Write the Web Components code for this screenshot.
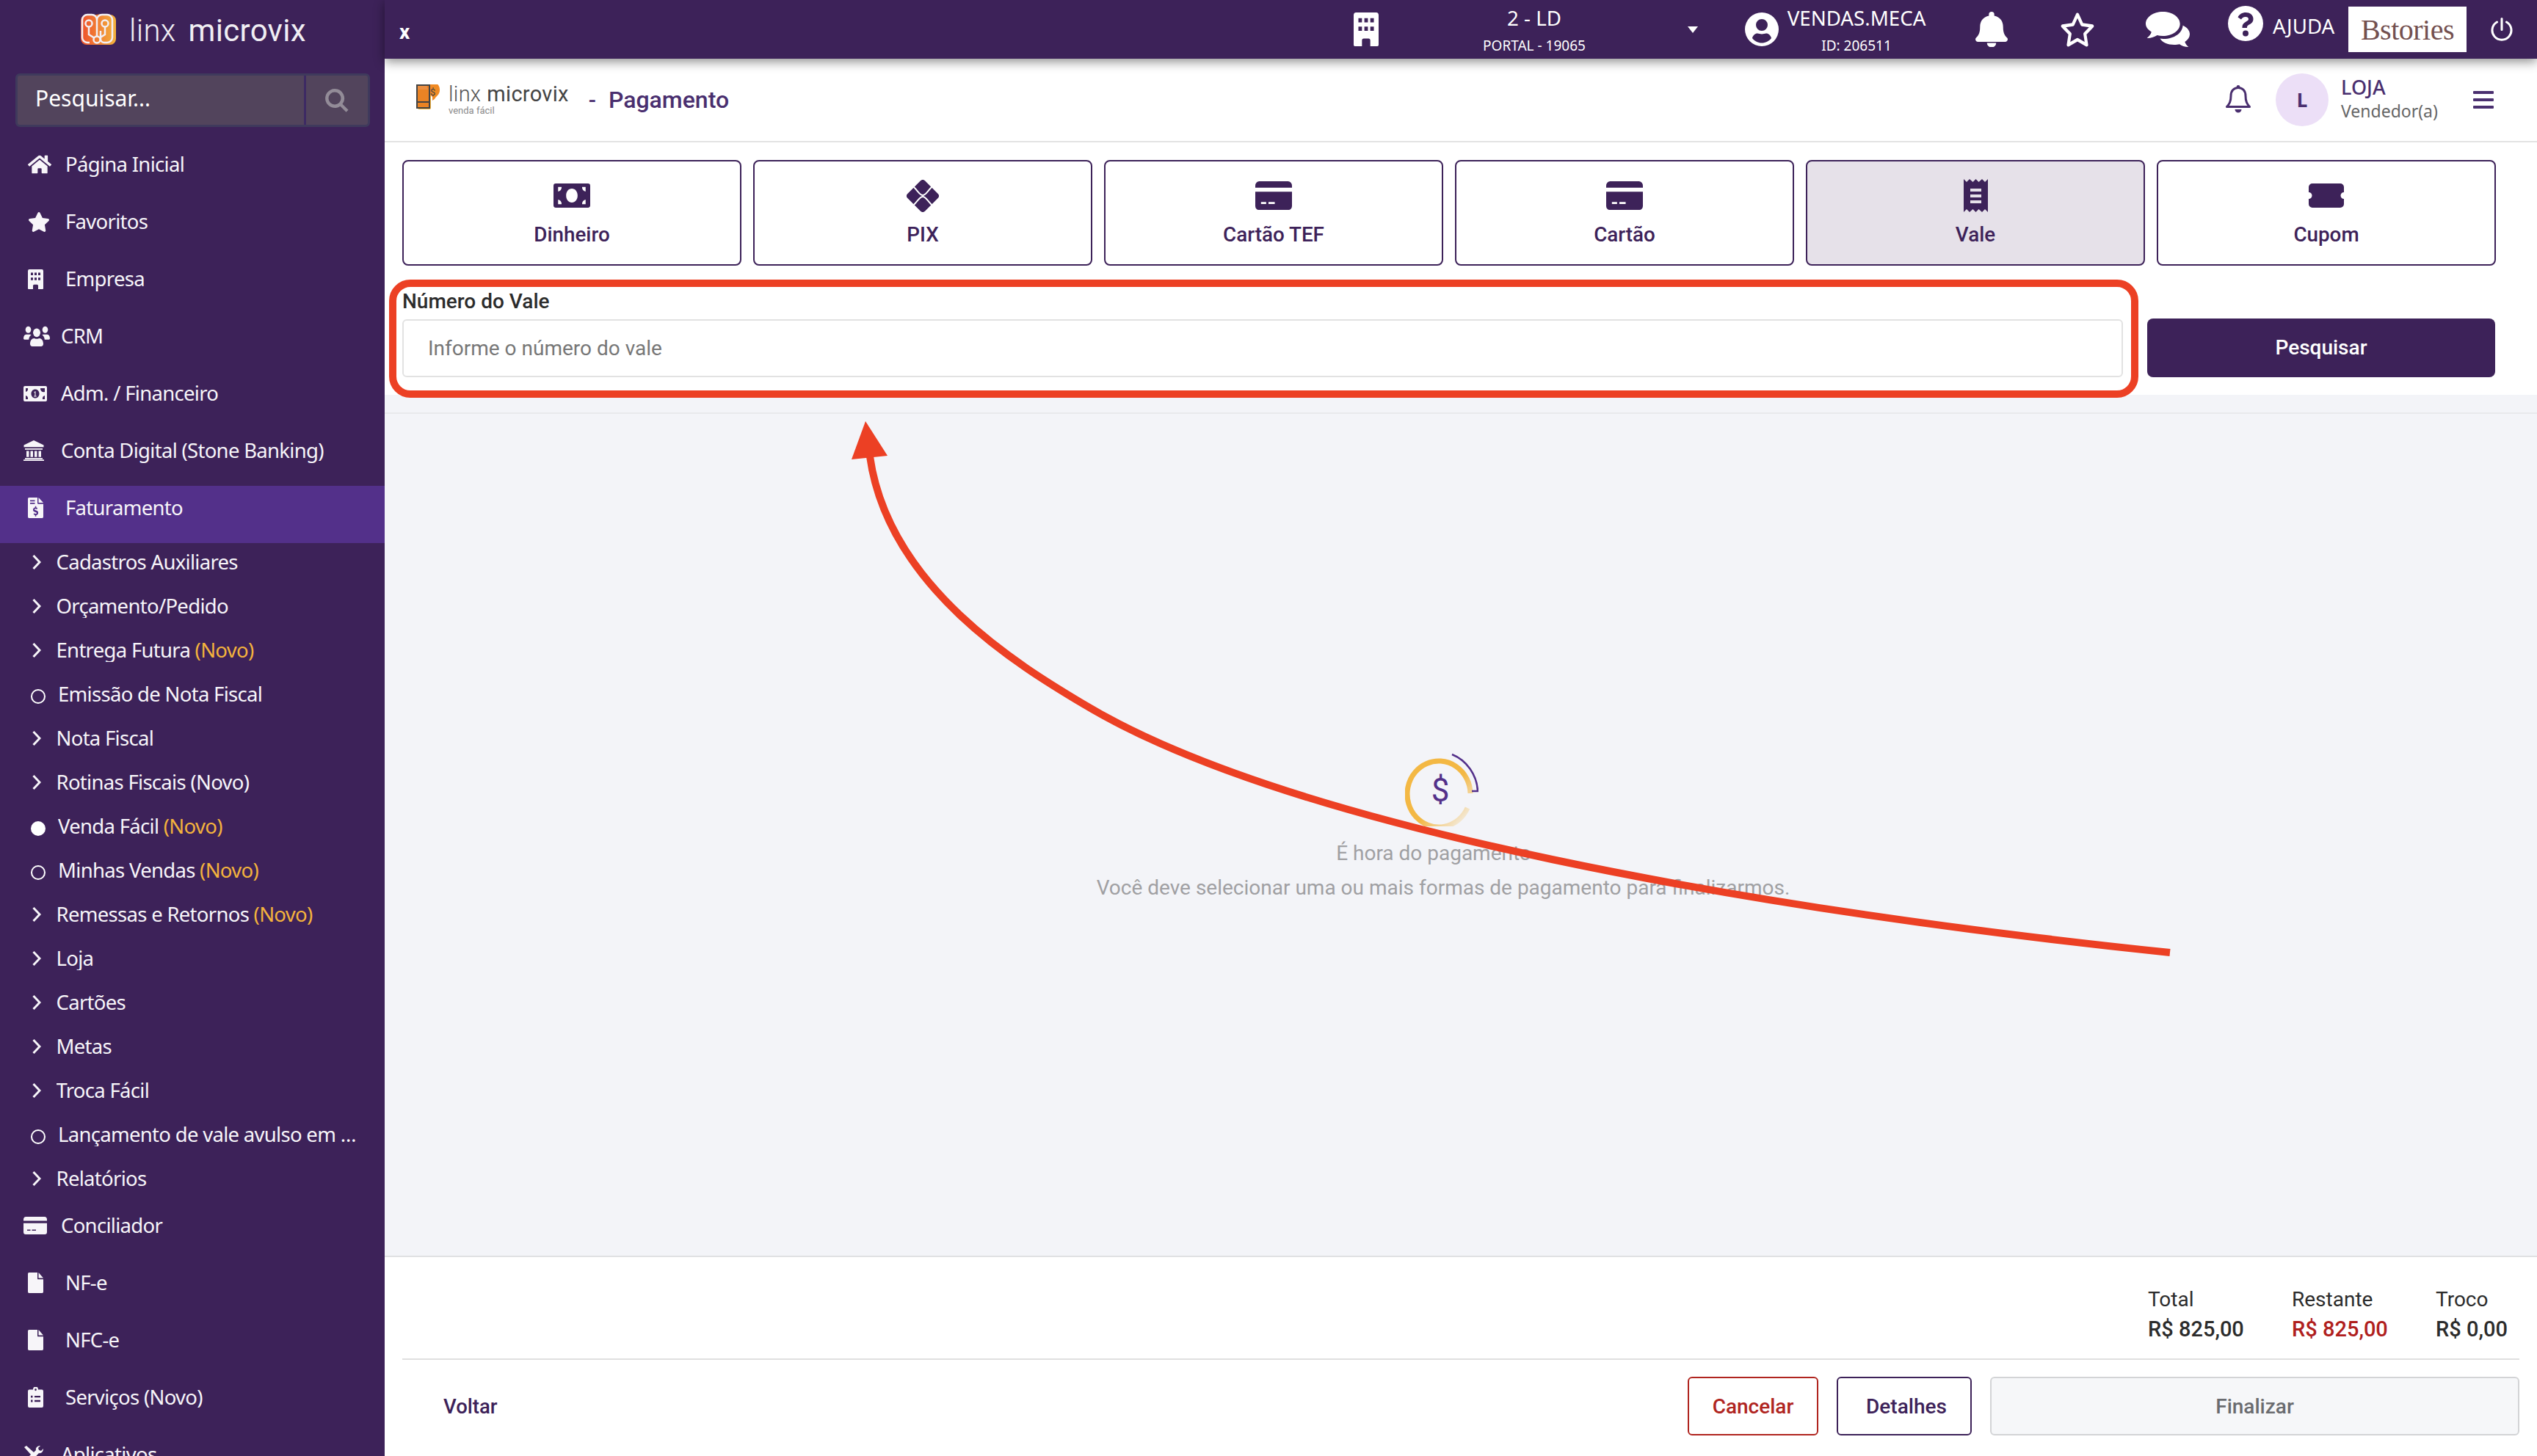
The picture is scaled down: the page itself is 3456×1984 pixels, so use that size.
<!DOCTYPE html>
<html lang="pt-BR">
<head>
<meta charset="utf-8">
<title>Pagamento</title>
<style>
html,body{margin:0;padding:0;height:100%;background:#fff;font-family:Roboto,"Liberation Sans",sans-serif;overflow:hidden}
</style>
</head>
<body>
<app-shell></app-shell>
<script>
const ICONS = {
  home: ['0 0 576 512','<path d="M280.37 148.26L96 300.11V464a16 16 0 0 0 16 16l112.06-.29a16 16 0 0 0 15.92-16V368a16 16 0 0 1 16-16h64a16 16 0 0 1 16 16v95.64a16 16 0 0 0 16 16.05L464 480a16 16 0 0 0 16-16V300L295.67 148.26a12.19 12.19 0 0 0-15.3 0zM571.6 251.47L488 182.56V44.05a12 12 0 0 0-12-12h-56a12 12 0 0 0-12 12v72.61L318.47 43a48 48 0 0 0-61 0L4.34 251.47a12 12 0 0 0-1.6 16.9l25.5 31A12 12 0 0 0 45.15 301l235.22-193.74a12.19 12.19 0 0 1 15.3 0L530.9 301a12 12 0 0 0 16.9-1.6l25.5-31a12 12 0 0 0-1.7-16.93z"/>'],
  star: ['0 0 576 512','<path d="M259.3 17.8L194 150.2 47.9 171.5c-26.2 3.8-36.7 36.1-17.7 54.6l105.7 103-25 145.5c-4.5 26.3 23.2 46 46.4 33.7L288 439.6l130.7 68.7c23.2 12.2 50.9-7.4 46.4-33.7l-25-145.5 105.7-103c19-18.5 8.5-50.8-17.7-54.6L382 150.2 316.7 17.8c-11.7-23.6-45.6-23.9-57.4 0z"/>'],
  staro: ['0 0 576 512','<path fill="none" stroke="currentColor" stroke-width="48" stroke-linejoin="round" d="M288 40l72 146 161 23-116 113 27 160-144-76-144 76 27-160L55 209l161-23z"/>'],
  building: ['0 0 21 24','<path fill-rule="evenodd" d="M2 0h17a2 2 0 0 1 2 2v21a1 1 0 0 1-1 1h-6v-4a1.5 1.5 0 0 0-1.5-1.5h-4A1.5 1.5 0 0 0 7 20v4H1a1 1 0 0 1-1-1V2a2 2 0 0 1 2-2zM4 4v3h3V4zm5 0v3h3V4zm5 0v3h3V4zM4 10v3h3v-3zm5 0v3h3v-3zm5 0v3h3v-3z"/>'],
  users: ['0 0 36 24','<circle cx="6.5" cy="4.5" r="3.8"/><circle cx="29.5" cy="4.5" r="3.8"/><circle cx="18" cy="8" r="5"/><path d="M0 14.5c0-3 2-4.500 4-4.500h5c.6 0 1.200.2 1.700.5-1.800 1-3.200 2.800-3.500 5.500H1.500C.6 16 0 15.300 0 14.500zM36 14.500c0 .8-.6 1.500-1.500 1.500h-5.700c-.3-2.700-1.700-4.500-3.500-5.500.5-.3 1.100-.5 1.700-.5h5c2 0 4 1.500 4 4.500zM9 21c0-4 2.500-6.500 5.500-6.500.8 0 1.800.8 3.500.8s2.700-.8 3.500-.8C24.500 14.500 27 17 27 21c0 1.700-1.300 3-3 3H12c-1.700 0-3-1.300-3-3z"/>'],
  money: ['0 0 32 21','<path fill-rule="evenodd" d="M2 0h28a2 2 0 0 1 2 2v17a2 2 0 0 1-2 2H2a2 2 0 0 1-2-2V2a2 2 0 0 1 2-2zM3 3v5a4.500 4.500 0 0 0 3-5zm20 0a4.500 4.500 0 0 0 6 5V3zM3 13v5h3a4.500 4.500 0 0 0-3-5zm26 0a4.500 4.500 0 0 0-3 5h3zM16 4.500c-3.300 0-5.500 2.700-5.500 6s2.200 6 5.500 6 5.500-2.700 5.500-6-2.200-6-5.500-6z"/><path d="M14.500 8l2-1v6.500h1.200v1h-3.500v-1h1.200V8.800l-.9.400z"/>'],
  cash: ['0 0 32 21','<path fill-rule="evenodd" d="M2 0h28a2 2 0 0 1 2 2v17a2 2 0 0 1-2 2H2a2 2 0 0 1-2-2V2a2 2 0 0 1 2-2zM4 3v4a3.500 3.500 0 0 0 3-4zm21 0a3.500 3.500 0 0 0 3 4V3zM4 14v4h3a3.500 3.500 0 0 0-3-4zm24 0a3.500 3.500 0 0 0-3 4h3zM16 4.500c-3 0-5 2.700-5 6s2 6 5 6 5-2.700 5-6-2-6-5-6z"/>'],
  bank: ['0 0 28 24','<path d="M14 0l13.500 5.500V8H.5V5.500zM2 9.500h24V11H2zM4 12.500h3.500v7H4zM9.500 12.500H13v7H9.500zM15 12.500h3.500v7H15zM20.500 12.500H24v7h-3.500zM2 20.500h24V22H2zM0 22.500h28V24H0z"/>'],
  invoice: ['0 0 21 24','<path fill-rule="evenodd" d="M1.500 0H13v6.500a1 1 0 0 0 1 1h7V22.500a1.500 1.500 0 0 1-1.500 1.500h-18A1.500 1.500 0 0 1 0 22.500v-21A1.500 1.500 0 0 1 1.500 0zM3 3v1.500h6.500V3zM3 6v1.500h6.500V6zM11.300 10h-1.500v1.500c-1.600.2-2.800 1.300-2.800 2.800 0 1.500 1.200 2.200 2.800 2.600l1.300.4c.6.200.9.400.9.800 0 .5-.5.800-1.200.8-.7 0-1.500-.2-2.200-.7l-1 1.300c.7.600 1.400.9 2.200 1v1.500h1.500V20.500c1.700-.2 2.800-1.300 2.800-2.800 0-1.600-1.200-2.300-2.800-2.700l-1.300-.4c-.6-.2-.9-.4-.9-.7 0-.5.500-.8 1.100-.8.700 0 1.300.2 1.900.6l1-1.300a4.500 4.500 0 0 0-1.800-.8zM14.500 0L21 6h-6.500z"/>'],
  file: ['0 0 21 24','<path d="M13 0H1.500A1.500 1.500 0 0 0 0 1.500v21A1.500 1.500 0 0 0 1.500 24h18a1.500 1.500 0 0 0 1.500-1.500V8h-7a1 1 0 0 1-1-1zM14.500 0v6.500H21z"/>'],
  clip: ['0 0 21 24','<path fill-rule="evenodd" d="M7 3a3.500 3.500 0 0 1 7 0h5a2 2 0 0 1 2 2v17a2 2 0 0 1-2 2H2a2 2 0 0 1-2-2V5a2 2 0 0 1 2-2zm3.500-1.200a1.300 1.300 0 1 0 0 2.600 1.300 1.300 0 0 0 0-2.600zM4 10v2.500h2.500V10zm5 .3v2h8v-2zM4 15v2.500h2.500V15zm5 .3v2h8v-2z"/>'],
  card: ['0 0 32 22','<path fill-rule="evenodd" d="M0 3.500A3.500 3.500 0 0 1 3.500 0h25A3.500 3.500 0 0 1 32 3.500V5H0zM0 8h32v11a3 3 0 0 1-3 3H3a3 3 0 0 1-3-3zm5 8v1.500h4.500V16zm6.500 0v1.500H17V16z"/>'],
  tools: ['0 0 28 24','<path d="M1 2l3-2 10 9 3-3c-1-3 2-6 6-6l-3 3 1 3 3 1 3-3c0 4-3 7-6 6L8 24l-4-1-1-4 7-7z"/>'],
  pix: ['0 0 44 44','<path d="M19 1.300a4 4 0 0 1 6 0l17.700 17.700a4 4 0 0 1 0 6L25 42.700a4 4 0 0 1-6 0L1.300 25a4 4 0 0 1 0-6z"/><path fill="none" stroke="#fff" stroke-width="2" d="M9.500 9.500C17 17 18 21 22 21s5-4 12.500-11.500M9.500 34.500C17 27 18 23 22 23s5 4 12.500 11.500"/>'],
  receipt: ['0 0 33 45','<path fill-rule="evenodd" d="M0 0l4 4 4-4 4.500 4L16.500 0l4 4 4.500-4 4 4 4-4v45l-4-4-4 4-4.500-4-4 4-4-4-4.500 4-4-4-4 4zM9 13v4h15v-4zm0 8v4h15v-4zm0 8v4h15v-4z"/>'],
  ticket: ['0 0 50 33','<path d="M6 0h38a5 5 0 0 1 5 5v7a4.500 4.500 0 0 0 0 9v7a5 5 0 0 1-5 5H6a5 5 0 0 1-5-5v-7a4.500 4.500 0 0 0 0-9V5a5 5 0 0 1 5-5z"/>'],
  search: ['0 0 32 32','<path fill-rule="evenodd" d="M13 0a13 13 0 0 1 10.500 20.700l8 8-3 3-8-8A13 13 0 1 1 13 0zm0 4.500a8.500 8.500 0 1 0 0 17 8.500 8.500 0 0 0 0-17z"/>'],
  chev: ['0 0 12 22','<path fill="none" stroke="currentColor" stroke-width="3" d="M1.500 2L10 11l-8.500 9"/>'],
  bell: ['0 0 42 48','<path d="M21 0a3.500 3.500 0 0 1 3.500 3.500v2C32 7 36 13 36 20.500c0 10 3 12.500 5 14.800.6.700 1 1.500 1 2.200 0 1.800-1.400 3.500-3.500 3.500h-35C1.400 41 0 39.300 0 37.500c0-.7.400-1.500 1-2.200C3 33 6 30.500 6 20.500 6 13 10 7 17.500 5.500v-2A3.500 3.500 0 0 1 21 0zM15 42.500h12a6 6 0 0 1-12 0z"/>'],
  bello: ['0 0 36 40','<path fill="none" stroke="currentColor" stroke-width="3" stroke-linejoin="round" d="M18 3.500c-6 0-10 4.500-10 11 0 8-2 11-5.500 15h31c-3.500-4-5.500-7-5.500-15 0-6.500-4-11-10-11z"/><path d="M18 0a2.300 2.300 0 0 1 2.300 2.300V5h-4.600V2.300A2.300 2.300 0 0 1 18 0zM13.500 33h9a4.500 4.500 0 0 1-9 0z"/>'],
  user: ['0 0 46 46','<path fill-rule="evenodd" d="M23 0a23 23 0 1 1 0 46 23 23 0 0 1 0-46zm0 9a8 8 0 1 0 0 16 8 8 0 0 0 0-16zm-13 26c3 4 8 6.500 13 6.500s10-2.500 13-6.500c-1-4-4-6.500-7-6.500-2 0-3.500 1-6 1s-4-1-6-1c-3 0-6 2.500-7 6.500z"/>'],
  comments: ['0 0 54 48','<path d="M21 0c11.600 0 21 7.400 21 16.500S32.600 33 21 33c-2.500 0-4.800-.3-7-1-3 2-7 4-12.500 4 2.500-2.500 5-5.500 5.500-8.500C2.700 24.500 0 20.700 0 16.500 0 7.400 9.400 0 21 0z"/><path d="M45 18.500c5.500 2.500 9 7 9 12 0 4-2.200 7.700-6 10.500.5 2.500 2.500 5 4.500 7-5 0-8.500-1.800-11-3.800-2 .5-4 .8-6.500.8-8 0-15-3.500-17.500-8.500 2 .3 3 .5 4.500.5 13 0 23-8 23.500-18.500z"/>'],
  help: ['0 0 48 48','<path fill-rule="evenodd" d="M24 0a24 24 0 1 1 0 48 24 24 0 0 1 0-48zm.500 9c-5.500 0-9 2.500-11 6.500l4.500 3c1.500-2.200 2.800-3.500 6-3.500 2.300 0 4 1.200 4 3 0 1.700-1.500 2.500-3.700 3.700-2.600 1.500-4.800 3.300-4.800 6.800v1.500h6.500v-1c0-1.800 1.300-2.500 3.500-3.700 2.800-1.600 5-3.500 5-7.500C34.500 12 29.500 9 24.500 9zm-.500 24.500a4 4 0 1 0 0 8 4 4 0 0 0 0-8z"/>'],
  power: ['0 0 30 32','<path fill="none" stroke="currentColor" stroke-width="3" stroke-linecap="round" d="M15 1.500v15M8.500 6A13 13 0 1 0 21.500 6"/>'],
  menu: ['0 0 28 24','<path d="M1 0h26a1 1 0 0 1 1 1v2a1 1 0 0 1-1 1H1a1 1 0 0 1-1-1V1a1 1 0 0 1 1-1zM1 10h26a1 1 0 0 1 1 1v2a1 1 0 0 1-1 1H1a1 1 0 0 1-1-1v-2a1 1 0 0 1 1-1zM1 20h26a1 1 0 0 1 1 1v2a1 1 0 0 1-1 1H1a1 1 0 0 1-1-1v-2a1 1 0 0 1 1-1z"/>']
};

customElements.define('app-icon', class extends HTMLElement {
  connectedCallback() {
    let [vb, body] = ICONS[this.getAttribute('name')];
    this.attachShadow({mode: 'open'}).innerHTML = `<style>
      :host{display:block;width:${this.getAttribute('w')}px;height:${this.getAttribute('h')}px;flex:none}
      svg{display:block;width:100%;height:100%;fill:currentColor}
    </style><svg viewBox="${vb}" preserveAspectRatio="none">${body}</svg>`;
  }
});

customElements.define('nav-item', class extends HTMLElement {
  connectedCallback() {
    let [w, h] = (this.getAttribute('size') || '21 24').split(' ');
    this.attachShadow({mode: 'open'}).innerHTML = `<style>
      :host{display:flex;height:78px;box-sizing:border-box;align-items:flex-start;color:#f7f5f9;padding:14px 0 0 38px;font:27.500px/32px "Noto Sans",sans-serif;letter-spacing:-.7px}
      :host([flush]){padding-left:32px}
      :host([active]){background:#53308a}
      .ic{width:51px;height:32px;display:flex;align-items:center}
    </style><span class="ic"><app-icon name="${this.getAttribute('icon')}" w="${w}" h="${h}"></app-icon></span><span><slot></slot></span>`;
  }
});

customElements.define('sub-item', class extends HTMLElement {
  connectedCallback() {
    let kind = this.getAttribute('kind') || 'chev';
    let mark = kind == 'chev' ? '<app-icon name="chev" w="12" h="22"></app-icon>' : `<i class="dot ${kind}"></i>`;
    this.attachShadow({mode: 'open'}).innerHTML = `<style>
      :host{display:flex;height:60px;box-sizing:border-box;padding:0 0 9px 44px;align-items:center;color:#f7f5f9;font:27.500px/32px "Noto Sans",sans-serif;letter-spacing:-.7px}
      .m{width:32.500px;flex:none}
      :host([kind]) .m{width:37px;margin-left:-2px}
      .dot{display:block;width:16px;height:16px;border:2px solid #fff;border-radius:50%;margin-top:6px}
      .dot.on{background:#fff}
      .t{flex:1;min-width:0;margin-right:33px;overflow:hidden;white-space:nowrap;text-overflow:ellipsis}
    </style><span class="m">${mark}</span><span class="t"><slot></slot></span>`;
  }
});

customElements.define('side-bar', class extends HTMLElement {
  connectedCallback() {
    let sub = [
      ['', 'Cadastros Auxiliares'], ['', 'Orçamento/Pedido'], ['', 'Entrega Futura <b>(Novo)</b>'],
      ['off', 'Emissão de Nota Fiscal'], ['', 'Nota Fiscal'], ['', 'Rotinas Fiscais (Novo)'],
      ['on', 'Venda Fácil <b>(Novo)</b>'], ['off', 'Minhas Vendas <b>(Novo)</b>'], ['', 'Remessas e Retornos <b>(Novo)</b>'],
      ['', 'Loja'], ['', 'Cartões'], ['', 'Metas'], ['', 'Troca Fácil'],
      ['off', 'Lançamento de vale avulso em lote'], ['', 'Relatórios']
    ].map(([k, t]) => `<sub-item ${k ? `kind="${k}"` : ''}>${t}</sub-item>`).join('');
    this.attachShadow({mode: 'open'}).innerHTML = `<style>
      :host{display:block;width:524px;flex:none;background:#3d2259;overflow:hidden;height:100%}
      .logo{height:80px;display:flex;align-items:flex-start;padding-left:110px;box-sizing:border-box;color:#f0eef3}
      .logo svg{margin-top:18px;flex:none}
      .w{font:300 42px/50px Roboto,sans-serif;margin:17px 0 0 18px;letter-spacing:.3px}
      .w + .w{font-weight:400;margin-left:17px}
      .sb{margin:20px 20px 21px 21px;height:73px;box-sizing:border-box;border:3px solid #3f3a5c;border-radius:6px;background:#52445c;display:flex;color:#fff}
      .sb div{flex:1;border-right:3px solid #3d2a63;font:30px/62px "Noto Sans",sans-serif;padding-left:24px;border-radius:4px 0 0 4px}
      .sb span{width:84px;display:flex;align-items:center;justify-content:center;color:#938c98}
      b{font-weight:400;color:#f3b33d}
    </style>
    <div class="logo">
      <svg width="48" height="44" viewBox="0 0 48 44"><defs><linearGradient id="lg"><stop offset="0" stop-color="#ee4f2c"/><stop offset="1" stop-color="#f3b33d"/></linearGradient></defs>
        <path d="M8 2h14c3-1 6-1 10 0h8a8 8 0 0 1 8 8v25a8 8 0 0 1-8 8H8a8 8 0 0 1-8-8V10a8 8 0 0 1 8-8z" fill="url(#lg)"/>
        <g fill="none" stroke="#f2eff4" stroke-width="2.500"><path d="M12 40H9a7 7 0 0 1-7-7V9a7 7 0 0 1 7-7h6a7 7 0 0 1 7 7v23M22 9a7 7 0 0 1 7-7h7a7 7 0 0 1 7 7v24a7 7 0 0 1-7 7h-4a5 5 0 0 1-5-5V24"/><circle cx="11" cy="14" r="4.500"/><circle cx="33" cy="14" r="4.500"/><circle cx="22" cy="36" r="4.500"/><path d="M11 18.500V29l8 5M33 18.500V29l-8 5"/></g></svg>
      <span class="w">linx</span><span class="w">microvix</span>
    </div>
    <div class="sb"><div>Pesquisar...</div><span><app-icon name="search" w="32" h="32"></app-icon></span></div>
    <nav-item icon="home" size="32 28">Página Inicial</nav-item>
    <nav-item icon="star" size="30 27">Favoritos</nav-item>
    <nav-item icon="building" size="21 27">Empresa</nav-item>
    <nav-item flush icon="users" size="36 28">CRM</nav-item>
    <nav-item flush icon="money" size="32 21">Adm. / Financeiro</nav-item>
    <nav-item flush icon="bank" size="28 28">Conta Digital (Stone Banking)</nav-item>
    <nav-item active icon="invoice" size="21 28">Faturamento</nav-item>
    ${sub}
    <nav-item flush icon="card" size="32 24">Conciliador</nav-item>
    <nav-item icon="file" size="21 28">NF-e</nav-item>
    <nav-item icon="file" size="21 28">NFC-e</nav-item>
    <nav-item icon="clip" size="21 28">Serviços (Novo)</nav-item>
    <nav-item flush icon="tools" size="28 24">Aplicativos</nav-item>`;
  }
});

customElements.define('top-bar', class extends HTMLElement {
  connectedCallback() {
    this.attachShadow({mode: 'open'}).innerHTML = `<style>
      :host{display:flex;height:80px;flex:none;align-items:center;background:#3d2259;color:#fff;position:relative;z-index:2;box-shadow:0 4px 14px rgba(0,0,0,.45);font-family:"Noto Sans",sans-serif}
      .x{font:700 28px Roboto,sans-serif;margin-left:20px;margin-right:auto;padding-top:6px}
      .st{width:408px;text-align:center;margin-left:8px}
      .big{font-size:27.700px;line-height:36px;display:block}
      .sm{font-size:19px;line-height:24px;display:block;margin-top:8px}
      .car{width:0;height:0;border:7px solid transparent;border-top:9px solid #fff;border-bottom:0;margin:0 0 0 5px}
      .nm{width:190px;text-align:center;margin-left:11px}
      .aj{font-size:27.700px;margin:-10px 0 0 13px;width:84px;white-space:nowrap}
      .bs{width:161px;height:62px;background:#fff;margin-left:19px;display:flex;align-items:center;justify-content:center;color:#74504f;font:40px "Liberation Serif",serif;letter-spacing:-.5px}
    </style>
    <span class="x">x</span>
    <app-icon name="building" w="34" h="46"></app-icon>
    <div class="st"><span class="big">2 - LD</span><span class="sm">PORTAL - 19065</span></div>
    <span class="car"></span>
    <app-icon name="user" w="46" h="46" style="margin-left:64px"></app-icon>
    <div class="nm"><span class="big">VENDAS.MECA</span><span class="sm">ID: 206511</span></div>
    <app-icon name="bell" w="44" h="48" style="margin-left:67px"></app-icon>
    <app-icon name="staro" w="50" h="48" style="margin-left:70px"></app-icon>
    <app-icon name="comments" w="60" h="48" style="margin-left:68px"></app-icon>
    <app-icon name="help" w="48" h="48" style="margin:-16px 0 0 52px"></app-icon>
    <span class="aj">AJUDA</span>
    <div class="bs">Bstories</div>
    <app-icon name="power" w="30" h="32" style="margin:0 33px 0 33px"></app-icon>`;
  }
});

customElements.define('page-header', class extends HTMLElement {
  connectedCallback() {
    this.attachShadow({mode: 'open'}).innerHTML = `<style>
      :host{display:flex;height:114px;box-sizing:border-box;flex:none;align-items:center;padding:0 59px 0 43px;border-bottom:2px solid #e3e3e3;background:#fff;color:#4a2f6f}
      .brand{display:grid;grid-template-columns:auto auto;column-gap:11px;align-items:start;color:#555}
      .lx{font:300 29px/30px Roboto,sans-serif;color:#555;margin-top:-2px;letter-spacing:.3px}
      .lx b{font-weight:400;margin-left:8px;color:#444}
      .vf{font:13px/13px Roboto,sans-serif;color:#8a8a8a;margin-top:1px}
      .ti{font:500 32px Roboto,sans-serif;margin-left:17px}
      .d{font:500 30px Roboto,sans-serif;margin-left:27px}
      .sp{flex:1}
      .av{width:72px;height:72px;border-radius:50%;background:#ecdff7;display:flex;align-items:center;justify-content:center;font:700 26px "Noto Sans",sans-serif;margin-left:33px}
      .who{margin:-3px 0 0 17px;width:180px;font-family:"Noto Sans",sans-serif}
      .who b{display:block;font:500 27px/32px "Noto Sans",sans-serif}
      .who span{display:block;font:23px/32px "Noto Sans",sans-serif;color:#666}
    </style>
    <div class="brand">
      <svg width="33" height="36" viewBox="0 0 33 36" style="grid-row:span 2"><rect x="2" y="7" width="18" height="27" rx="2" fill="#f3b33d"/><path d="M14 1a10 10 0 0 1 18 7c0 6-5 8-7 12l-3 2v-5l-3-3z" fill="#f08a24"/><path d="M1 1h17v31H1zM1 24h17" fill="#e87a20" fill-opacity=".85" stroke="#444" stroke-width="2"/><text x="19" y="15" font-size="13" font-family="Roboto" fill="#444">$</text></svg>
      <div class="lx">linx<b>microvix</b></div>
      <div class="vf">venda fácil</div>
    </div>
    <span class="d">-</span><span class="ti">Pagamento</span>
    <span class="sp"></span>
    <app-icon name="bello" w="36" h="40"></app-icon>
    <div class="av">L</div>
    <div class="who"><b>LOJA</b><span>Vendedor(a)</span></div>
    <app-icon name="menu" w="28" h="24"></app-icon>`;
  }
});

customElements.define('pay-tab', class extends HTMLElement {
  connectedCallback() {
    let [w, h] = this.getAttribute('size').split(' ');
    this.attachShadow({mode: 'open'}).innerHTML = `<style>
      :host{display:flex;flex-direction:column;align-items:center;box-sizing:border-box;height:144px;border:2px solid #3d2259;border-radius:8px;background:#fff;color:#3d2259;font:500 27.800px/34px Roboto,sans-serif}
      :host([active]){background:#e6e1e9}
      .i{height:45px;margin-top:24px;display:flex;align-items:center}
      .l{margin-top:14px}
    </style><span class="i"><app-icon name="${this.getAttribute('icon')}" w="${w}" h="${h}"></app-icon></span><span class="l"><slot></slot></span>`;
  }
});

customElements.define('voucher-form', class extends HTMLElement {
  connectedCallback() {
    this.attachShadow({mode: 'open'}).innerHTML = `<style>
      :host{display:grid;grid-template-columns:1fr 474px;column-gap:33px;align-items:end;padding:34px 57px 24px 24px;background:#fff;flex:none}
      label{display:block;font:500 28px/30px Roboto,sans-serif;color:#2c2c2c;margin-bottom:9px}
      .in{height:79px;box-sizing:border-box;border:2px solid #e2e2e2;border-radius:6px;padding-left:33px;font:28px/75px Roboto,sans-serif;color:#777}
      button{height:80px;border:0;border-radius:8px;background:#3d2259;color:#fff;font:500 28px Roboto,sans-serif;padding:0 0 2px}
    </style>
    <div><label>Número do Vale</label><div class="in">Informe o número do vale</div></div>
    <button>Pesquisar</button>`;
  }
});

customElements.define('empty-state', class extends HTMLElement {
  connectedCallback() {
    this.attachShadow({mode: 'open'}).innerHTML = `<style>
      :host{flex:1;display:flex;flex-direction:column;align-items:center;justify-content:center;padding:0 48px 16px 0;background:#f3f4f8;color:#a0a0a3;font:28px/47px Roboto,sans-serif;min-height:0}
      svg{display:block;margin:0 0 13px -4px}
      .a{margin-right:26px}
    </style>
    <svg width="100" height="100" viewBox="0 0 100 100">
      <defs><linearGradient id="fade" x1="0" y1="0" x2="1" y2="1"><stop offset=".55" stop-color="#f3b844"/><stop offset=".95" stop-color="#f3b844" stop-opacity=".05"/></linearGradient></defs>
      <path d="M89 55A43 45 0 1 0 85 75" fill="none" stroke="url(#fade)" stroke-width="7"/>
      <path d="M64 2C84 10 98 30 99 52h-8" fill="none" stroke="#53308a" stroke-width="2.500"/>
      <text x="48" y="66" text-anchor="middle" font-family="Roboto" font-size="44" fill="#53308a">$</text>
    </svg>
    <div class="a">É hora do pagamento</div>
    <div>Você deve selecionar uma ou mais formas de pagamento para finalizarmos.</div>`;
  }
});

customElements.define('total-col', class extends HTMLElement {
  connectedCallback() {
    this.attachShadow({mode: 'open'}).innerHTML = `<style>
      :host{display:block;font:28px/40px Roboto,sans-serif;color:#2c2c2c}
      b{display:block;font-weight:500;font-size:29px;white-space:nowrap}
      :host([due]) b{color:#b0201d}
    </style>${this.getAttribute('label')}<b>${this.getAttribute('value')}</b>`;
  }
});

customElements.define('action-btn', class extends HTMLElement {
  connectedCallback() {
    this.attachShadow({mode: 'open'}).innerHTML = `<style>
      :host{display:flex;align-items:center;justify-content:center;box-sizing:border-box;height:80px;border:2px solid currentColor;border-radius:6px;font:500 28px Roboto,sans-serif;background:#fff}
      :host([look=red]){color:#b0251f;width:178px}
      :host([look=purple]){color:#3d2259;width:184px;padding-left:6px}
      :host([look=off]){width:721px;color:#6a6c70;background:#f6f7f9;border-color:#d3d4d6}
    </style><slot></slot>`;
  }
});

customElements.define('pay-footer', class extends HTMLElement {
  connectedCallback() {
    this.attachShadow({mode: 'open'}).innerHTML = `<style>
      :host{display:block;flex:none;height:273px;box-sizing:border-box;background:#fff;border-top:2px solid #e0e1e3;padding:0 24px}
      .tot{display:grid;grid-template-columns:196px 196px 98px;justify-content:end;height:138px;box-sizing:border-box;padding:38px 16px 0 0}
      hr{margin:0;border:0;border-top:2px solid #e0e0e0}
      .acts{display:flex;gap:25px;align-items:center;padding-top:23px}
      .v{font:500 27.500px Roboto,sans-serif;color:#3d2259;padding-left:56px;margin-right:auto}
    </style>
    <div class="tot">
      <total-col label="Total" value="R$ 825,00"></total-col>
      <total-col due label="Restante" value="R$ 825,00"></total-col>
      <total-col label="Troco" value="R$ 0,00"></total-col>
    </div>
    <hr>
    <div class="acts">
      <span class="v">Voltar</span>
      <action-btn look="red">Cancelar</action-btn>
      <action-btn look="purple">Detalhes</action-btn>
      <action-btn look="off">Finalizar</action-btn>
    </div>`;
  }
});

customElements.define('mark-up', class extends HTMLElement {
  connectedCallback() {
    this.attachShadow({mode: 'open'}).innerHTML = `<style>
      :host{position:absolute;inset:0;pointer-events:none;z-index:5}
      svg{display:block}
    </style>
    <svg width="3456" height="1984" viewBox="0 0 3456 1984" fill="none" stroke="#ec4024" stroke-width="10">
      <rect x="535" y="386" width="2373" height="151" rx="24"/>
      <path d="M2956 1298C2400 1240 1760 1130 1477 960C1390 908 1210 800 1185 622"/>
      <path d="M1179 574L1160 626L1209 621z" fill="#ec4024" stroke="none"/>
    </svg>`;
  }
});

customElements.define('app-shell', class extends HTMLElement {
  connectedCallback() {
    this.attachShadow({mode: 'open'}).innerHTML = `<style>
      :host{display:flex;position:relative;width:3456px;height:1984px;overflow:hidden}
      main{flex:1;min-width:0;display:flex;flex-direction:column}
      .tabs{display:grid;grid-template-columns:repeat(6,462px);gap:16px;padding:24px 0 0 24px;background:#fff;flex:none}
      .strip{height:24px;flex:none;background:#f3f4f8;border-bottom:2px solid #e8e9ec}
    </style>
    <side-bar></side-bar>
    <main>
      <top-bar></top-bar>
      <page-header></page-header>
      <div class="tabs">
        <pay-tab icon="cash" size="50 33">Dinheiro</pay-tab>
        <pay-tab icon="pix" size="44 44">PIX</pay-tab>
        <pay-tab icon="card" size="50 39">Cartão TEF</pay-tab>
        <pay-tab icon="card" size="50 39">Cartão</pay-tab>
        <pay-tab active icon="receipt" size="33 45">Vale</pay-tab>
        <pay-tab icon="ticket" size="50 33">Cupom</pay-tab>
      </div>
      <voucher-form></voucher-form>
      <div class="strip"></div>
      <empty-state></empty-state>
      <pay-footer></pay-footer>
    </main>
    <mark-up></mark-up>`;
  }
});
</script>
</body>
</html>
